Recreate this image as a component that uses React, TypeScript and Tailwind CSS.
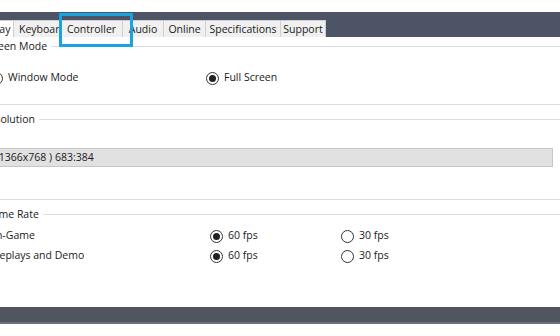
import React from "react";

const tabs: [string, string][] = [
  ["Keyboard", "w-[47px] justify-start pl-[5px]"],
  ["Controller", "w-[62px] justify-center"],
  ["Audio", "w-[41px] justify-center"],
  ["Online", "w-[42px] justify-center"],
  ["Specifications", "w-[75px] justify-center"],
  ["Support", "w-[45px] justify-center"],
];

function Radio({ checked }: { checked?: boolean }) {
  return (
    <span className="flex h-[13px] w-[13px] shrink-0 items-center justify-center rounded-full border border-[#333] bg-white">
      {checked && <span className="h-[7px] w-[7px] rounded-full bg-[#222]" />}
    </span>
  );
}

function GroupTitle({ label }: { label: string }) {
  return (
    <div className="flex h-[11px] items-center">
      <span className="pr-1 leading-none">{label}</span>
      <span className="h-px flex-1 bg-[#dcdcdc]" />
    </div>
  );
}

export default function App() {
  return (
    <div
      className="relative h-[336px] w-[560px] overflow-hidden bg-white text-[10.5px] text-[#1a1a1a]"
      style={{ fontFamily: '"Open Sans", "Noto Sans", sans-serif' }}
    >
      <div className="h-[12px]" />
      <div className="flex h-[25px] items-end bg-[#4d5466]">
        <div className="-ml-[31px] flex h-[17px] items-stretch">
          <div className="flex w-[45px] items-center border border-b-0 border-[#d0d0d0] bg-white pt-[1px] pl-[5px]">
            Display
          </div>
          {tabs.map(([t, cls]) => (
            <div
              key={t}
              className={`flex ${cls} items-center overflow-hidden whitespace-nowrap border border-b-0 border-l-0 border-[#d0d0d0] bg-[#f0f0f0] pt-[1px]`}
            >
              {t}
            </div>
          ))}
        </div>
      </div>

      <div className="-ml-[17px]">
        <div className="pt-[4px]">
          <GroupTitle label="Screen Mode" />
          <div className="mt-[4px] flex h-[44px] items-center">
            <div className="flex w-[223px] items-center gap-[5px] pl-[7px]">
              <Radio />
              <span>Window Mode</span>
            </div>
            <div className="flex items-center gap-[5px]">
              <Radio checked />
              <span>Full Screen</span>
            </div>
          </div>
          <div className="mt-[4px] h-px bg-[#dcdcdc]" />
        </div>

        <div className="pt-[9px]">
          <GroupTitle label="Resolution" />
          <div className="mt-[23px] mr-[7px] ml-[9px] flex h-[19px] items-center border border-[#c6c6c6] bg-[#e1e1e1] pl-0">
            ( 1366x768 ) 683:384
          </div>
          <div className="mt-[32px] h-px bg-[#dcdcdc]" />
        </div>

        <div className="pt-[9px]">
          <GroupTitle label="Frame Rate" />
          <div className="mt-[10px] flex flex-col gap-[8px]">
            {["In-Game", "Replays and Demo"].map((r) => (
              <div key={r} className="flex h-[12px] items-center">
                <span className="w-[227px] pl-[10px]">{r}</span>
                <div className="flex w-[131px] items-center gap-[5px]">
                  <Radio checked />
                  <span>60 fps</span>
                </div>
                <div className="flex items-center gap-[5px]">
                  <Radio />
                  <span>30 fps</span>
                </div>
              </div>
            ))}
          </div>
        </div>
      </div>

      <div className="absolute left-0 top-[307px] h-[17px] w-full border-b-2 border-[#6b6f7a] bg-[#50555f]" />

      <div className="absolute left-[59px] top-[13px] h-[34px] w-[74px] border-[3px] border-[#1aa3e3]" />
    </div>
  );
}
